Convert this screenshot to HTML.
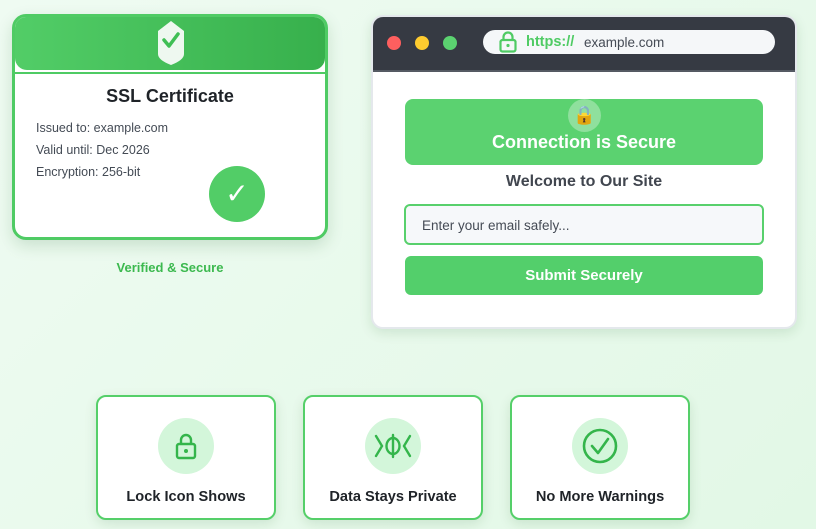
<!DOCTYPE html>
<html><head><style>
*{box-sizing:border-box;margin:0;padding:0}
body{width:816px;height:529px;overflow:hidden;background:linear-gradient(135deg,#effbf2,#e2f8e6);font-family:"Liberation Sans",sans-serif;position:relative}
.abs{position:absolute}
.cert{left:12px;top:14px;width:316px;height:226px;border:3px solid #4fcb64;border-radius:14px;background:#fff;box-shadow:0 6px 16px rgba(0,80,20,.15);overflow:hidden}
.cert .hd{position:absolute;left:0;top:0;right:0;height:53px;background:linear-gradient(90deg,#52cd67,#37b04c);border-radius:0 0 12px 12px}
.cert .ln{position:absolute;left:0;right:0;top:55px;height:2px;background:#4fcb64}
.cert h2{position:absolute;top:69px;width:100%;text-align:center;font-size:18px;color:#1f2328}
.cert p{position:absolute;left:21px;font-size:12.5px;color:#444b55}
.chk{left:209px;top:166px;width:56px;height:56px;border-radius:50%;background:#52cd67;color:#fff;font-size:28px;text-align:center;line-height:56px;font-family:"DejaVu Sans",sans-serif}
.br{left:371px;top:15px;width:426px;height:314px;background:#fff;border:2px solid #e4e8ec;border-radius:12px;box-shadow:0 4px 12px rgba(0,80,20,.12);overflow:hidden}
.bar{position:absolute;left:0;top:0;right:0;height:55px;background:#363a43;border-bottom:2px solid #555a63}
.dot{position:absolute;top:19px;width:14px;height:14px;border-radius:50%}
.url{position:absolute;left:110px;top:13px;width:292px;height:24px;background:#f5f7f9;border-radius:12px;font-size:13.5px}
.ban{left:405px;top:99px;width:358px;height:66px;background:#5bd270;border-radius:8px;color:#fff;text-align:center}
.fc{top:395px;width:180px;height:125px;background:#fff;border:2px solid #55cf69;border-radius:10px;box-shadow:0 4px 12px rgba(0,80,20,.12);text-align:center}
.fc .ic{position:absolute;left:60px;top:21px;width:56px;height:56px;border-radius:50%;background:#d3f6da}
.fc .t{position:absolute;top:92px;width:100%;font-size:14.6px;font-weight:bold;color:#1f2328}
</style></head><body>
<div class="abs cert">
 <div class="hd"></div><div class="ln"></div>
 <svg class="abs" style="left:140px;top:3px" width="32" height="46" viewBox="0 0 32 46"><path d="M16 1 L29 11 V34 Q29 40 16 45 Q3 40 3 34 V11 Z" fill="#eef8f0"/><path d="M9 20 L14 26 L23 14" stroke="#3fbf55" stroke-width="3.5" fill="none" stroke-linecap="round" stroke-linejoin="round"/></svg>
 <h2>SSL Certificate</h2>
 <p style="top:104px">Issued to: example.com</p>
 <p style="top:126px">Valid until: Dec 2026</p>
 <p style="top:148px">Encryption: 256-bit</p>
</div>
<div class="abs chk">✓</div>
<div class="abs" style="left:70px;top:260px;width:200px;text-align:center;font-size:13px;font-weight:bold;color:#3cb94f">Verified &amp; Secure</div>

<div class="abs br">
 <div class="bar">
  <div class="dot" style="left:14px;background:#fe5f5f"></div>
  <div class="dot" style="left:42px;background:#fecb2f"></div>
  <div class="dot" style="left:70px;background:#5bd270"></div>
  <div class="url">
   <svg class="abs" style="left:15px;top:1px" width="20" height="22" viewBox="0 0 20 22"><rect x="2.5" y="9" width="15" height="11.5" rx="2" fill="none" stroke="#4fcb64" stroke-width="2.2"/><path d="M5.5 9 V6 a4.5 4.5 0 0 1 9 0 V9" fill="none" stroke="#4fcb64" stroke-width="2.2"/><circle cx="10" cy="14.5" r="1.6" fill="#4fcb64"/></svg>
   <span class="abs" style="left:43px;top:4px;color:#4fcb64;font-weight:bold;font-size:14.5px">https://</span>
   <span class="abs" style="left:101px;top:5px;color:#454b55">example.com</span>
  </div>
 </div>
</div>
<div class="abs ban">
 <div class="abs" style="left:163px;top:0px;width:33px;height:33px;border-radius:50%;background:#8fe09d;font-size:18px;line-height:33px">🔒</div>
 <div class="abs" style="top:33px;width:100%;font-size:18px;font-weight:bold">Connection is Secure</div>
</div>
<div class="abs" style="left:405px;top:173px;width:358px;text-align:center;font-size:16px;font-weight:bold;color:#41464f">Welcome to Our Site</div>
<div class="abs" style="left:404px;top:204px;width:360px;height:41px;border:2px solid #58d06c;background:#f6f8fa;border-radius:6px;font-size:13.5px;color:#454b55;padding:12px 0 0 16px">Enter your email safely...</div>
<div class="abs" style="left:405px;top:256px;width:358px;height:39px;background:#53cf6b;border-radius:6px;color:#fff;font-size:15px;font-weight:bold;text-align:center;line-height:39px">Submit Securely</div>

<div class="abs fc" style="left:96px">
 <div class="ic"><svg class="abs" style="left:16px;top:14px" width="24" height="28" viewBox="0 0 24 28"><rect x="3" y="12" width="18" height="14" rx="2" fill="none" stroke="#34b54b" stroke-width="2.4"/><path d="M7 12 V8 a5 5 0 0 1 10 0 V12" fill="none" stroke="#34b54b" stroke-width="2.4"/><circle cx="12" cy="19" r="2" fill="#34b54b"/></svg></div>
 <div class="t">Lock Icon Shows</div>
</div>
<div class="abs fc" style="left:303px">
 <div class="ic"><svg class="abs" style="left:9px;top:15px" width="38" height="26" viewBox="0 0 38 26"><g fill="none" stroke="#34b54b" stroke-width="2.4" stroke-linecap="round"><path d="M2 3 L8 13 L2 23"/><path d="M36 3 L30 13 L36 23"/><ellipse cx="19" cy="13" rx="6.5" ry="8"/><path d="M19 2 V24"/></g></svg></div>
 <div class="t">Data Stays Private</div>
</div>
<div class="abs fc" style="left:510px">
 <div class="ic"><svg class="abs" style="left:10px;top:10px" width="36" height="36" viewBox="0 0 36 36"><circle cx="18" cy="18" r="16" fill="none" stroke="#34b54b" stroke-width="2.6"/><path d="M10 18 L16 25 L26 11" fill="none" stroke="#34b54b" stroke-width="2.6" stroke-linecap="round" stroke-linejoin="round"/></svg></div>
 <div class="t">No More Warnings</div>
</div>
</body></html>
